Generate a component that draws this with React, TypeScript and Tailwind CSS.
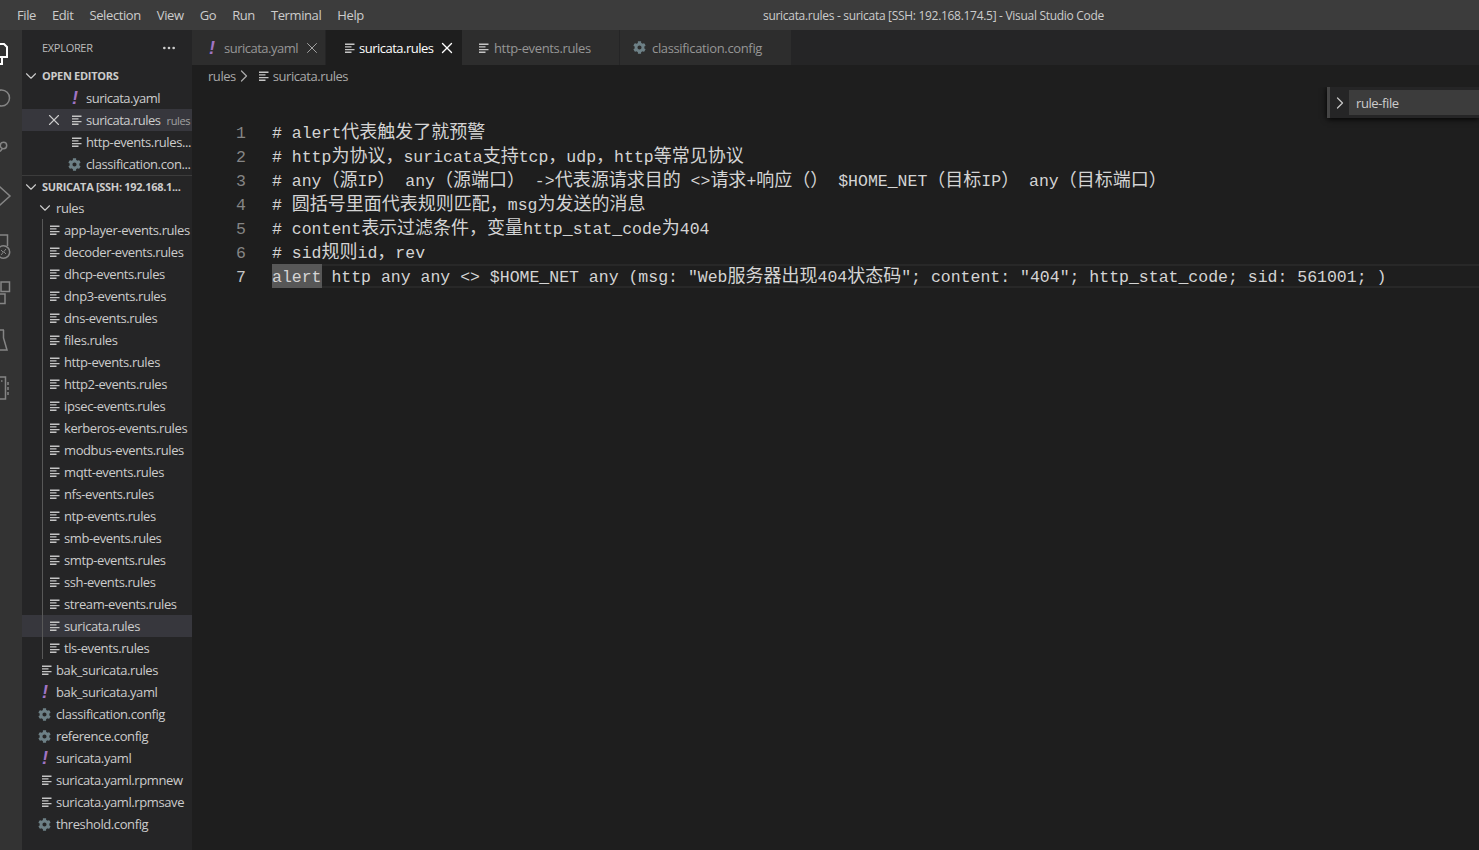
import { ChevronDown, ChevronRight, X, Ellipsis } from "lucide-react";
import { FaCog } from "react-icons/fa";
import type { ReactNode } from "react";

const cjkRe = /([\u3000-\u303f\u4e00-\u9fff\uff00-\uffef]+)/;

// Latin runs are sized so one cell is 9.9px wide, CJK runs sit on an 18px cell like the original font pairing
const Code = ({ text }: { text: string }) => (
  <>
    {text.split(cjkRe).map((part, i) =>
      i % 2 === 1 ? (
        <span key={i} className="text-[18px] leading-[0] font-['Noto_Sans_CJK_SC',sans-serif]">
          {part}
        </span>
      ) : (
        <span key={i}>{part}</span>
      )
    )}
  </>
);

// label text sits 1px under the row centre, icons stay on it
const T = ({ children, className = "" }: { children: ReactNode; className?: string }) => (
  <span className={`pt-[2px] ${className}`}>{children}</span>
);

const RulesIcon = ({ className = "" }: { className?: string }) => (
  <svg width="12" height="12" viewBox="0 0 12 12" className={`shrink-0 ${className}`}>
    <path d="M1 1.5h9.5v1.4H1zM1 4.2h6.5v1.4H1zM1 6.9h9.5v1.4H1zM1 9.6h6.5v1.4H1z" fill="#c5c5c5" />
  </svg>
);

const YamlIcon = () => (
  <span className="w-3 shrink-0 pl-[1px] text-left text-[18px] leading-none font-bold italic text-[#a074c4] font-['Liberation_Sans',sans-serif]">
    !
  </span>
);

const GearIcon = () => <FaCog size={13} className="-ml-[3px] mr-[2px] shrink-0 text-[#6d8086]" />;

const FileIcon = ({ kind }: { kind: string }) =>
  kind === "y" ? <YamlIcon /> : kind === "g" ? <GearIcon /> : <RulesIcon />;

const menu = ["File", "Edit", "Selection", "View", "Go", "Run", "Terminal", "Help"];

const ruleFiles = [
  "app-layer-events.rules",
  "decoder-events.rules",
  "dhcp-events.rules",
  "dnp3-events.rules",
  "dns-events.rules",
  "files.rules",
  "http-events.rules",
  "http2-events.rules",
  "ipsec-events.rules",
  "kerberos-events.rules",
  "modbus-events.rules",
  "mqtt-events.rules",
  "nfs-events.rules",
  "ntp-events.rules",
  "smb-events.rules",
  "smtp-events.rules",
  "ssh-events.rules",
  "stream-events.rules",
  "suricata.rules",
  "tls-events.rules",
];

const rootFiles = [
  { name: "bak_suricata.rules", kind: "r" },
  { name: "bak_suricata.yaml", kind: "y" },
  { name: "classification.config", kind: "g" },
  { name: "reference.config", kind: "g" },
  { name: "suricata.yaml", kind: "y" },
  { name: "suricata.yaml.rpmnew", kind: "r" },
  { name: "suricata.yaml.rpmsave", kind: "r" },
  { name: "threshold.config", kind: "g" },
];

const codeLines = [
  "# alert代表触发了就预警",
  "# http为协议，suricata支持tcp，udp，http等常见协议",
  "# any（源IP） any（源端口） ->代表源请求目的 <>请求+响应（） $HOME_NET（目标IP） any（目标端口）",
  "# 圆括号里面代表规则匹配，msg为发送的消息",
  "# content表示过滤条件，变量http_stat_code为404",
  "# sid规则id，rev",
];

const Row = ({ children, className = "" }: { children: ReactNode; className?: string }) => (
  <div className={`flex h-[22px] items-center whitespace-nowrap overflow-hidden ${className}`}>{children}</div>
);

// the window is cut off on the left, so only the right part of each icon shows
const ActivityBar = () => (
  <div className="w-[22px] shrink-0 bg-[#333333] overflow-hidden flex flex-col pt-[12px]">
    <svg width="22" height="24" viewBox="0 0 22 24" fill="none" stroke="#ffffff" strokeWidth="2">
      <path d="M0 2h4l3 3v10H0M2 16v6H0" />
    </svg>
    <svg width="22" height="20" viewBox="0 0 22 20" fill="none" stroke="#858585" strokeWidth="1.5" className="mt-[22px]">
      <circle cx="1.5" cy="10" r="8" />
    </svg>
    <svg width="22" height="12" viewBox="0 0 22 12" fill="none" stroke="#858585" strokeWidth="1.5" className="mt-[33px]">
      <circle cx="3.5" cy="4.5" r="3.2" />
      <path d="M2.5 7.5L0 10.5" />
    </svg>
    <svg width="22" height="22" viewBox="0 0 22 22" fill="none" stroke="#858585" strokeWidth="1.5" className="mt-[32px]">
      <path d="M-1 1l11 10L-1 21" />
    </svg>
    <svg width="22" height="28" viewBox="0 0 22 28" fill="none" stroke="#858585" strokeWidth="1.5" className="mt-[27px]">
      <path d="M0 1h7.5v11" />
      <circle cx="3.5" cy="18" r="6.2" />
      <path d="M1 21l5-6M1 16l2 2M4 18l2 2" strokeWidth="1" />
    </svg>
    <svg width="22" height="24" viewBox="0 0 22 24" fill="none" stroke="#858585" strokeWidth="1.5" className="mt-[19px]">
      <path d="M1 1h8.5v9.5H1zM-1 13h6v9.5h-6" />
    </svg>
    <svg width="22" height="24" viewBox="0 0 22 24" fill="none" stroke="#858585" strokeWidth="1.5" className="mt-[24px]">
      <path d="M3.5 1v8l3.5 12H-1M-1 1h5" />
    </svg>
    <svg width="22" height="26" viewBox="0 0 22 26" fill="none" stroke="#858585" strokeWidth="1.5" className="mt-[23px]">
      <path d="M0 1h5.5v22H0M1 5h1.5M8 6v3M8 11v3M8 16v3" />
    </svg>
  </div>
);

const Sidebar = () => (
  <aside className="w-[170px] shrink-0 bg-[#252526] overflow-hidden text-[13px] text-[#cccccc] tracking-[-0.4px]">
    <div className="flex h-[35px] items-center justify-between pl-5 pr-[15px] text-[11px] tracking-[-0.3px] text-[#bbbbbb]">
      <T>EXPLORER</T>
      <Ellipsis size={16} className="text-[#cccccc]" />
    </div>
    <Row className="gap-[2px] text-[11px] font-bold tracking-[-0.3px]">
      <ChevronDown size={18} strokeWidth={1.5} className="shrink-0" />
      <span>OPEN EDITORS</span>
    </Row>
    <Row className="pl-[49px] gap-[3px]">
      <YamlIcon />
      <T className="tracking-[-0.5px]">suricata.yaml</T>
    </Row>
    <Row className="bg-[#37373d] pl-[23px]">
      <X size={18} strokeWidth={1.5} className="shrink-0 text-[#cccccc]" />
      <RulesIcon className="ml-[8px]" />
      <T className="ml-[3px] tracking-[-0.5px]">suricata.rules</T>
      <T className="ml-[6px] text-[11px] text-[#a0a0a0]">rules</T>
    </Row>
    <Row className="pl-[49px] gap-[3px]">
      <RulesIcon />
      <T>http-events.rules...</T>
    </Row>
    <Row className="pl-[49px] gap-[3px]">
      <GearIcon />
      <T>classification.con...</T>
    </Row>
    <Row className="gap-[2px] text-[11px] font-bold tracking-[-0.3px] border-t border-[#3c3c3c]">
      <ChevronDown size={18} strokeWidth={1.5} className="shrink-0" />
      <T>SURICATA [SSH: 192.168.1...</T>
    </Row>
    <Row className="pl-[14px] gap-[2px]">
      <ChevronDown size={18} strokeWidth={1.5} className="shrink-0" />
      <T>rules</T>
    </Row>
    <div className="relative">
      <div className="absolute left-[20px] top-0 bottom-0 w-px bg-[#585858]" />
      {ruleFiles.map((name) => (
        <Row key={name} className={`pl-[27px] gap-[3px] ${name === "suricata.rules" ? "bg-[#37373d]" : ""}`}>
          <RulesIcon />
          <T>{name}</T>
        </Row>
      ))}
    </div>
    {rootFiles.map((f) => (
      <Row key={f.name} className="pl-[19px] gap-[3px]">
        <FileIcon kind={f.kind} />
        <T>{f.name}</T>
      </Row>
    ))}
  </aside>
);

const Tabs = () => (
  <div className="flex h-[35px] bg-[#252526] text-[13px] tracking-[-0.35px] shrink-0">
    <div className="flex w-[134px] items-center bg-[#2d2d2d] pl-[16px] text-[#969696] border-r border-[#252526]">
      <YamlIcon />
      <T className="ml-[4px] tracking-[-0.5px]">suricata.yaml</T>
      <X size={18} strokeWidth={1.3} className="ml-[5px] text-[#a6a6a6]" />
    </div>
    <div className="flex w-[136px] items-center bg-[#1e1e1e] pl-[18px] text-white">
      <RulesIcon />
      <T className="ml-[3px] tracking-[-0.5px]">suricata.rules</T>
      <X size={18} strokeWidth={1.8} className="ml-[4px] text-white" />
    </div>
    <div className="flex w-[157px] items-center bg-[#2d2d2d] pl-[16px] text-[#969696]">
      <RulesIcon />
      <T className="ml-[4px]">http-events.rules</T>
    </div>
    <div className="flex w-[172px] items-center bg-[#2d2d2d] pl-[16px] text-[#969696] border-l border-[#252526]">
      <GearIcon />
      <T className="ml-[4px]">classification.config</T>
    </div>
  </div>
);

const Breadcrumb = () => (
  <div className="flex h-[22px] items-center pl-[16px] text-[13px] tracking-[-0.45px] text-[#a9a9a9] shrink-0">
    <T>rules</T>
    <ChevronRight size={20} strokeWidth={1.5} className="-ml-[2px]" />
    <RulesIcon className="ml-[4px]" />
    <T className="ml-[3px]">suricata.rules</T>
  </div>
);

const Editor = () => (
  <div className="relative flex-1 overflow-hidden pt-[33px] text-[16.5px] leading-[28px] text-[#d4d4d4] font-['Liberation_Mono',monospace]">
    {codeLines.map((line, i) => (
      <div key={i} className="flex h-[24px] whitespace-pre">
        <span className="w-[54px] text-right text-[#858585]">{i + 1}</span>
        <span className="ml-[26px]">
          <Code text={line} />
        </span>
      </div>
    ))}
    <div className="flex h-[24px] whitespace-pre">
      <span className="w-[54px] text-right text-[#c6c6c6]">7</span>
      {/* current line outline starts at the text, not in the gutter */}
      <span className="ml-[26px] h-[24px] flex-1 border-y-2 border-[#282828] leading-[24px]">
        <span className="inline-block h-[24px] -my-[2px] bg-[#575757] leading-[28px]">alert</span>
        <Code text={' http any any <> $HOME_NET any (msg: "Web服务器出现404状态码"; content: "404"; http_stat_code; sid: 561001; )'} />
      </span>
    </div>
    {/* find widget, clipped by the right edge */}
    <div className="absolute right-0 top-0 flex h-[31px] w-[152px] items-center border-l-[3px] border-[#454545] bg-[#252526] shadow-[0_1px_6px_#000000] font-['Open_Sans',sans-serif] text-[13px] leading-normal tracking-[-0.4px]">
      <ChevronRight size={20} strokeWidth={1.5} className="shrink-0 text-[#c5c5c5]" />
      <div className="-ml-[1px] flex h-[25px] flex-1 items-center bg-[#3c3c3c] pl-[7px] text-[#cccccc]">
        <T>rule-file</T>
      </div>
    </div>
  </div>
);

export default function App() {
  return (
    <div className="flex h-[850px] w-[1479px] flex-col overflow-hidden bg-[#1e1e1e] font-['Open_Sans',sans-serif]">
      <header className="relative flex h-[30px] shrink-0 items-center bg-[#3c3c3c] pl-[17px] pt-[2px] text-[13px] tracking-[-0.4px] text-[#cccccc]">
        <nav className="flex gap-[16px]">
          {menu.map((m) => (
            <span key={m}>{m}</span>
          ))}
        </nav>
        <span className="absolute left-[763px] text-[12px] tracking-[-0.3px] text-[#cccccc]">
          suricata.rules - suricata [SSH: 192.168.174.5] - Visual Studio Code
        </span>
      </header>
      <div className="flex flex-1 overflow-hidden">
        <ActivityBar />
        <Sidebar />
        <main className="flex flex-1 flex-col overflow-hidden">
          <Tabs />
          <Breadcrumb />
          <Editor />
        </main>
      </div>
    </div>
  );
}
